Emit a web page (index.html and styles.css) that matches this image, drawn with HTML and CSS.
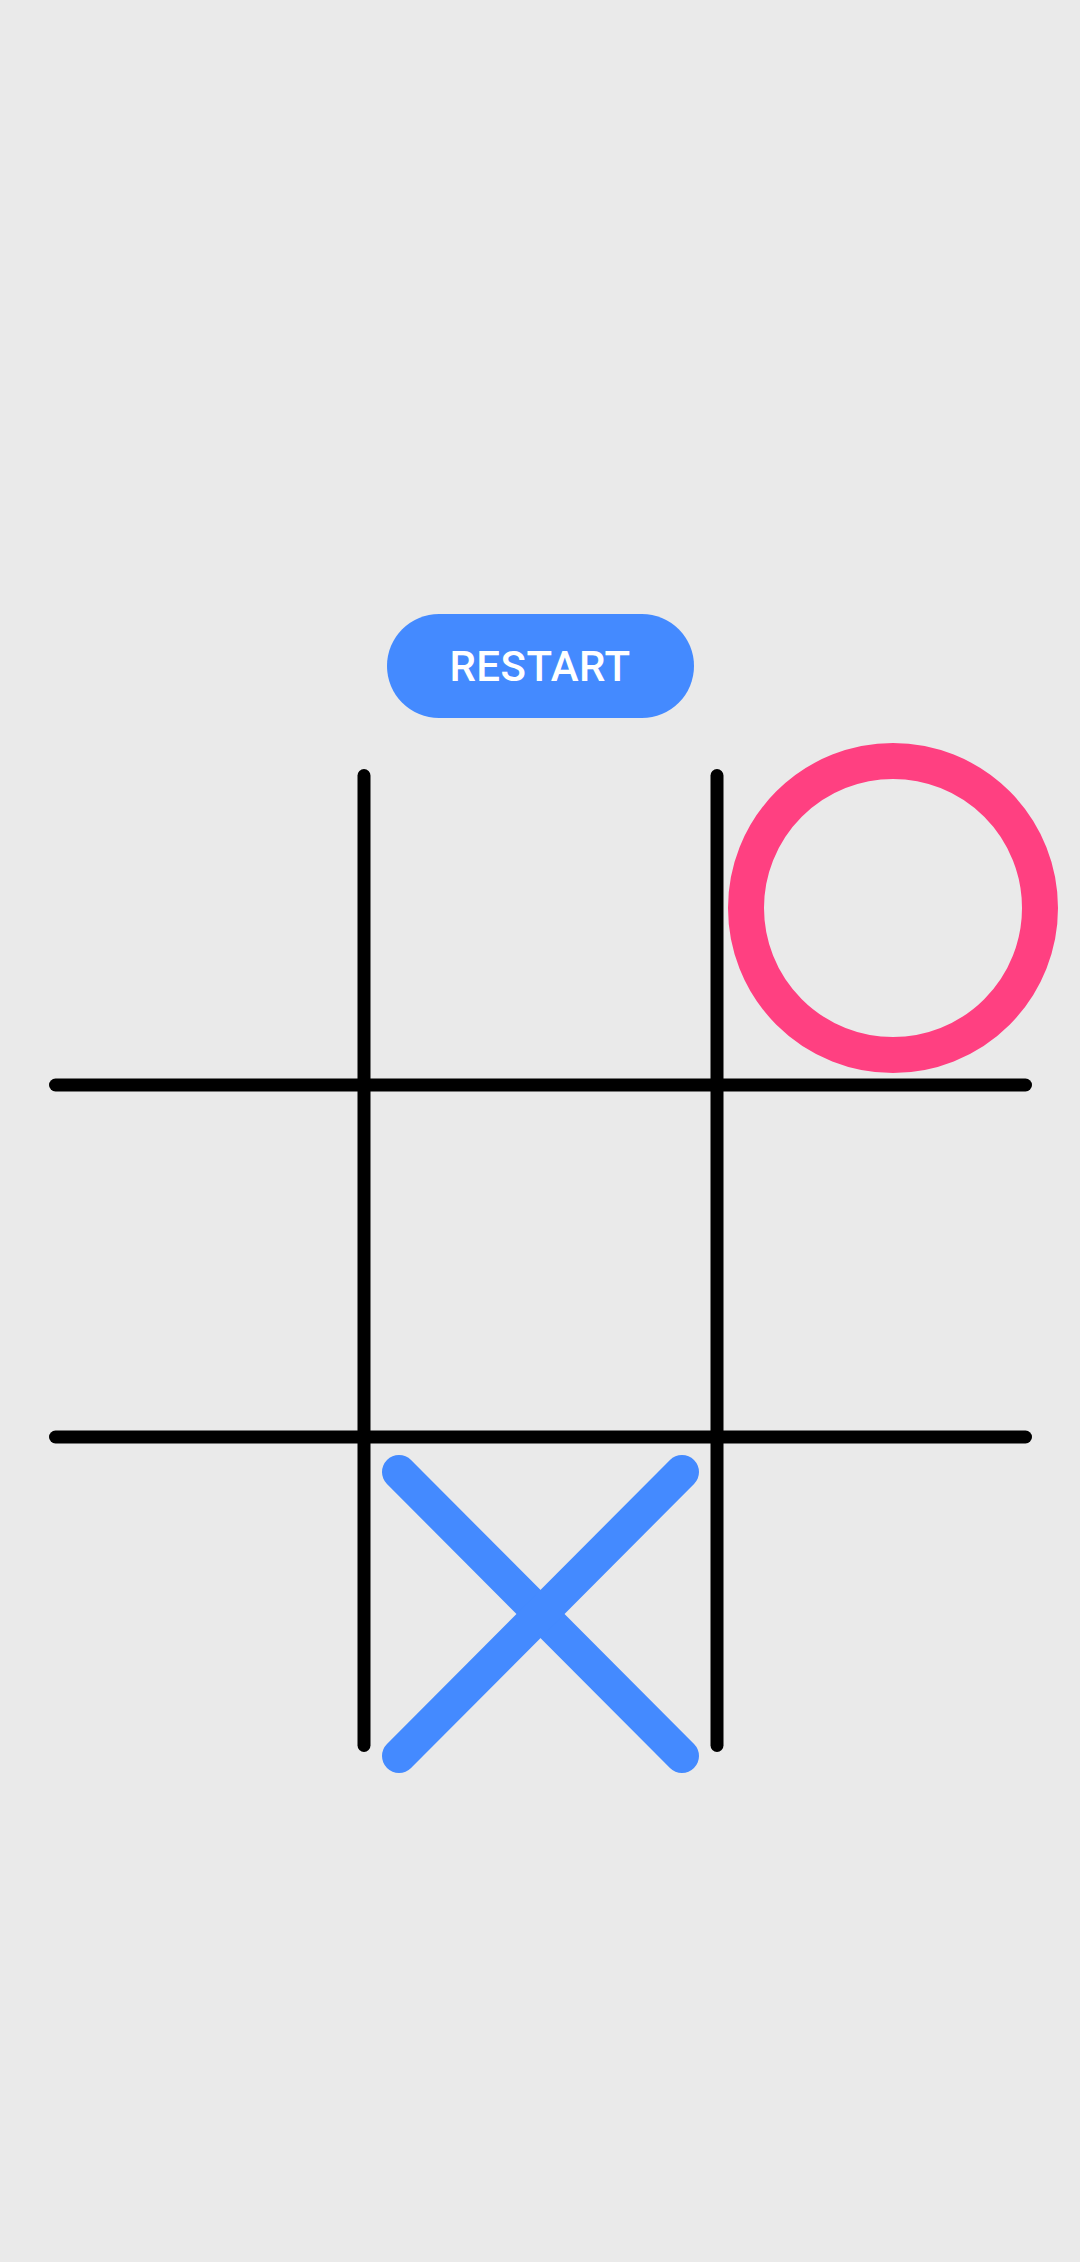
FILE: index.html
```html
<!DOCTYPE html>
<html lang="en">
<head>
<meta charset="utf-8">
<title>Tic Tac Toe</title>
<link rel="stylesheet" href="styles.css">
</head>
<body>
<main class="game">
  <button class="restart" type="button">RESTART</button>
  <svg class="board" viewBox="0 0 983 983" width="983" height="983" aria-label="Board">
    <!-- grid -->
    <g class="grid">
      <line x1="315" y1="6.5" x2="315" y2="976.5"/>
      <line x1="668" y1="6.5" x2="668" y2="976.5"/>
      <line x1="6.5" y1="316" x2="976.5" y2="316"/>
      <line x1="6.5" y1="668" x2="976.5" y2="668"/>
    </g>
    <!-- O in the top-right cell -->
    <circle class="mark-o" cx="844" cy="139" r="147"/>
    <!-- X in the bottom-middle cell -->
    <g class="mark-x">
      <line x1="350" y1="703" x2="633" y2="987"/>
      <line x1="633" y1="703" x2="350" y2="987"/>
    </g>
  </svg>
</main>
</body>
</html>
```
FILE: styles.css
```css
html, body {
  margin: 0;
  padding: 0;
  background: #eaeaea;
}

body {
  width: 1080px;
  height: 2262px;
  overflow: hidden;
  font-family: Roboto, "Noto Sans", sans-serif;
}

.game {
  display: flex;
  flex-direction: column;
  align-items: center;
  padding-top: 614px;
}

.restart {
  width: 307px;
  height: 104px;
  border: none;
  border-radius: 52px;
  background: #448aff;
  color: #ffffff;
  font-family: Roboto, "Noto Sans", sans-serif;
  font-weight: 500;
  font-size: 42px;
  letter-spacing: 0.5px;
  padding: 0;
  margin: 0 0 51px 0;
  cursor: pointer;
}

.board {
  display: block;
  overflow: visible;
}

.grid line {
  stroke: #000000;
  stroke-width: 13;
  stroke-linecap: round;
}

.mark-o {
  fill: none;
  stroke: #ff4081;
  stroke-width: 36;
}

.mark-x line {
  stroke: #448aff;
  stroke-width: 34;
  stroke-linecap: round;
}
```
